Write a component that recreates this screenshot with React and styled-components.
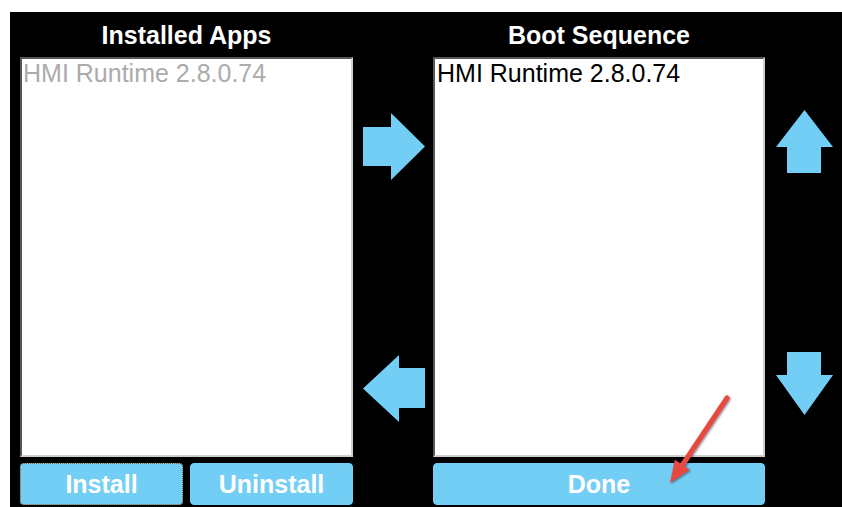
import styled, { createGlobalStyle } from "styled-components";

const GlobalStyle = createGlobalStyle`
  html, body {
    margin: 0;
    padding: 0;
    background: #ffffff;
  }
  body {
    font-family: "Liberation Sans", Arial, sans-serif;
  }
`;

const Screen = styled.div`
  position: relative;
  margin: 12px 0 0 10px;
  width: 832px;
  height: 495px;
  background: #000000;
  display: grid;
  grid-template-columns: 10px 333px 80px 332px 77px;
  grid-template-rows: 45px 400px 6px 42px 2px;
`;

const Title = styled.div`
  grid-row: 1;
  grid-column: ${(p) => p.col};
  display: flex;
  align-items: center;
  justify-content: center;
  color: #ffffff;
  font-size: 25px;
  font-weight: bold;
  padding-top: 2px;
`;

const ListBox = styled.div`
  grid-row: 2;
  grid-column: ${(p) => p.col};
  background: #ffffff;
  border-style: solid;
  border-width: 2px;
  border-color: #585858 #cfcfcf #cfcfcf #585858;
  box-sizing: border-box;
  padding: 0 0 0 ${(p) => (p.dim ? "1px" : "2px")};
`;

const ListItem = styled.div`
  font-size: 25px;
  line-height: 28px;
  color: ${(p) => (p.dim ? "#ababab" : "#000000")};
  white-space: nowrap;
`;

const ArrowColumn = styled.div`
  grid-row: 2;
  grid-column: ${(p) => p.col};
  display: flex;
  flex-direction: column;
  justify-content: space-between;
  align-items: center;
  padding: ${(p) => p.pad};
  box-sizing: border-box;
`;

const ButtonRow = styled.div`
  grid-row: 4;
  grid-column: ${(p) => p.col};
  display: flex;
  gap: 7px;
`;

const Button = styled.div`
  flex: 1;
  display: flex;
  align-items: center;
  justify-content: center;
  background: #73cef6;
  border-radius: 4px;
  color: #ffffff;
  font-size: 25px;
  font-weight: bold;
  box-sizing: border-box;
  border: 1px ${(p) => (p.focused ? "dotted #8a5a3a" : "solid #73cef6")};
`;

const Pointer = styled.svg`
  position: absolute;
  left: 655px;
  top: 380px;
  overflow: visible;
`;

const ARROW = "#73cef6";

const ArrowRight = () => (
  <svg width="62" height="67" viewBox="0 0 62 67">
    <polygon points="0,14 28,14 28,0 62,33.5 28,67 28,53 0,53" fill={ARROW} />
  </svg>
);

const ArrowLeft = () => (
  <svg width="62" height="67" viewBox="0 0 62 67">
    <polygon points="62,13 36,13 36,0 0,33.5 36,67 36,53 62,53" fill={ARROW} />
  </svg>
);

const ArrowUp = () => (
  <svg width="57" height="63" viewBox="0 0 57 63">
    <polygon points="28.5,0 57,37 45,37 45,63 11,63 11,37 0,37" fill={ARROW} />
  </svg>
);

const ArrowDown = () => (
  <svg width="57" height="63" viewBox="0 0 57 63">
    <polygon points="11,0 45,0 45,23 57,23 28.5,63 0,23 11,23" fill={ARROW} />
  </svg>
);

export default function App() {
  return (
    <>
      <GlobalStyle />
      <Screen>
        <Title col={2}>Installed Apps</Title>
        <Title col={4}>Boot Sequence</Title>

        <ListBox col={2} dim>
          <ListItem dim>HMI Runtime 2.8.0.74</ListItem>
        </ListBox>

        <ArrowColumn col={3} pad="56px 0 35px 2px">
          <ArrowRight />
          <ArrowLeft />
        </ArrowColumn>

        <ListBox col={4}>
          <ListItem>HMI Runtime 2.8.0.74</ListItem>
        </ListBox>

        <ArrowColumn col={5} pad="53px 0 42px 2px">
          <ArrowUp />
          <ArrowDown />
        </ArrowColumn>

        <ButtonRow col={2}>
          <Button focused>Install</Button>
          <Button>Uninstall</Button>
        </ButtonRow>
        <ButtonRow col={4}>
          <Button>Done</Button>
        </ButtonRow>

        {/* callout arrow pointing at Done */}
        <Pointer width="80" height="100" viewBox="0 0 80 100">
          <defs>
            <filter id="shadow" x="-30%" y="-30%" width="160%" height="160%">
              <feDropShadow dx="1" dy="1" stdDeviation="1.2" floodColor="#000" floodOpacity="0.5" />
            </filter>
          </defs>
          <g filter="url(#shadow)">
            <line x1="62" y1="6" x2="18" y2="72" stroke="#e5483f" strokeWidth="5" strokeLinecap="round" />
            <polygon points="5,91 9.8,67.7 24.8,77.7" fill="#e5483f" />
          </g>
        </Pointer>
      </Screen>
    </>
  );
}
